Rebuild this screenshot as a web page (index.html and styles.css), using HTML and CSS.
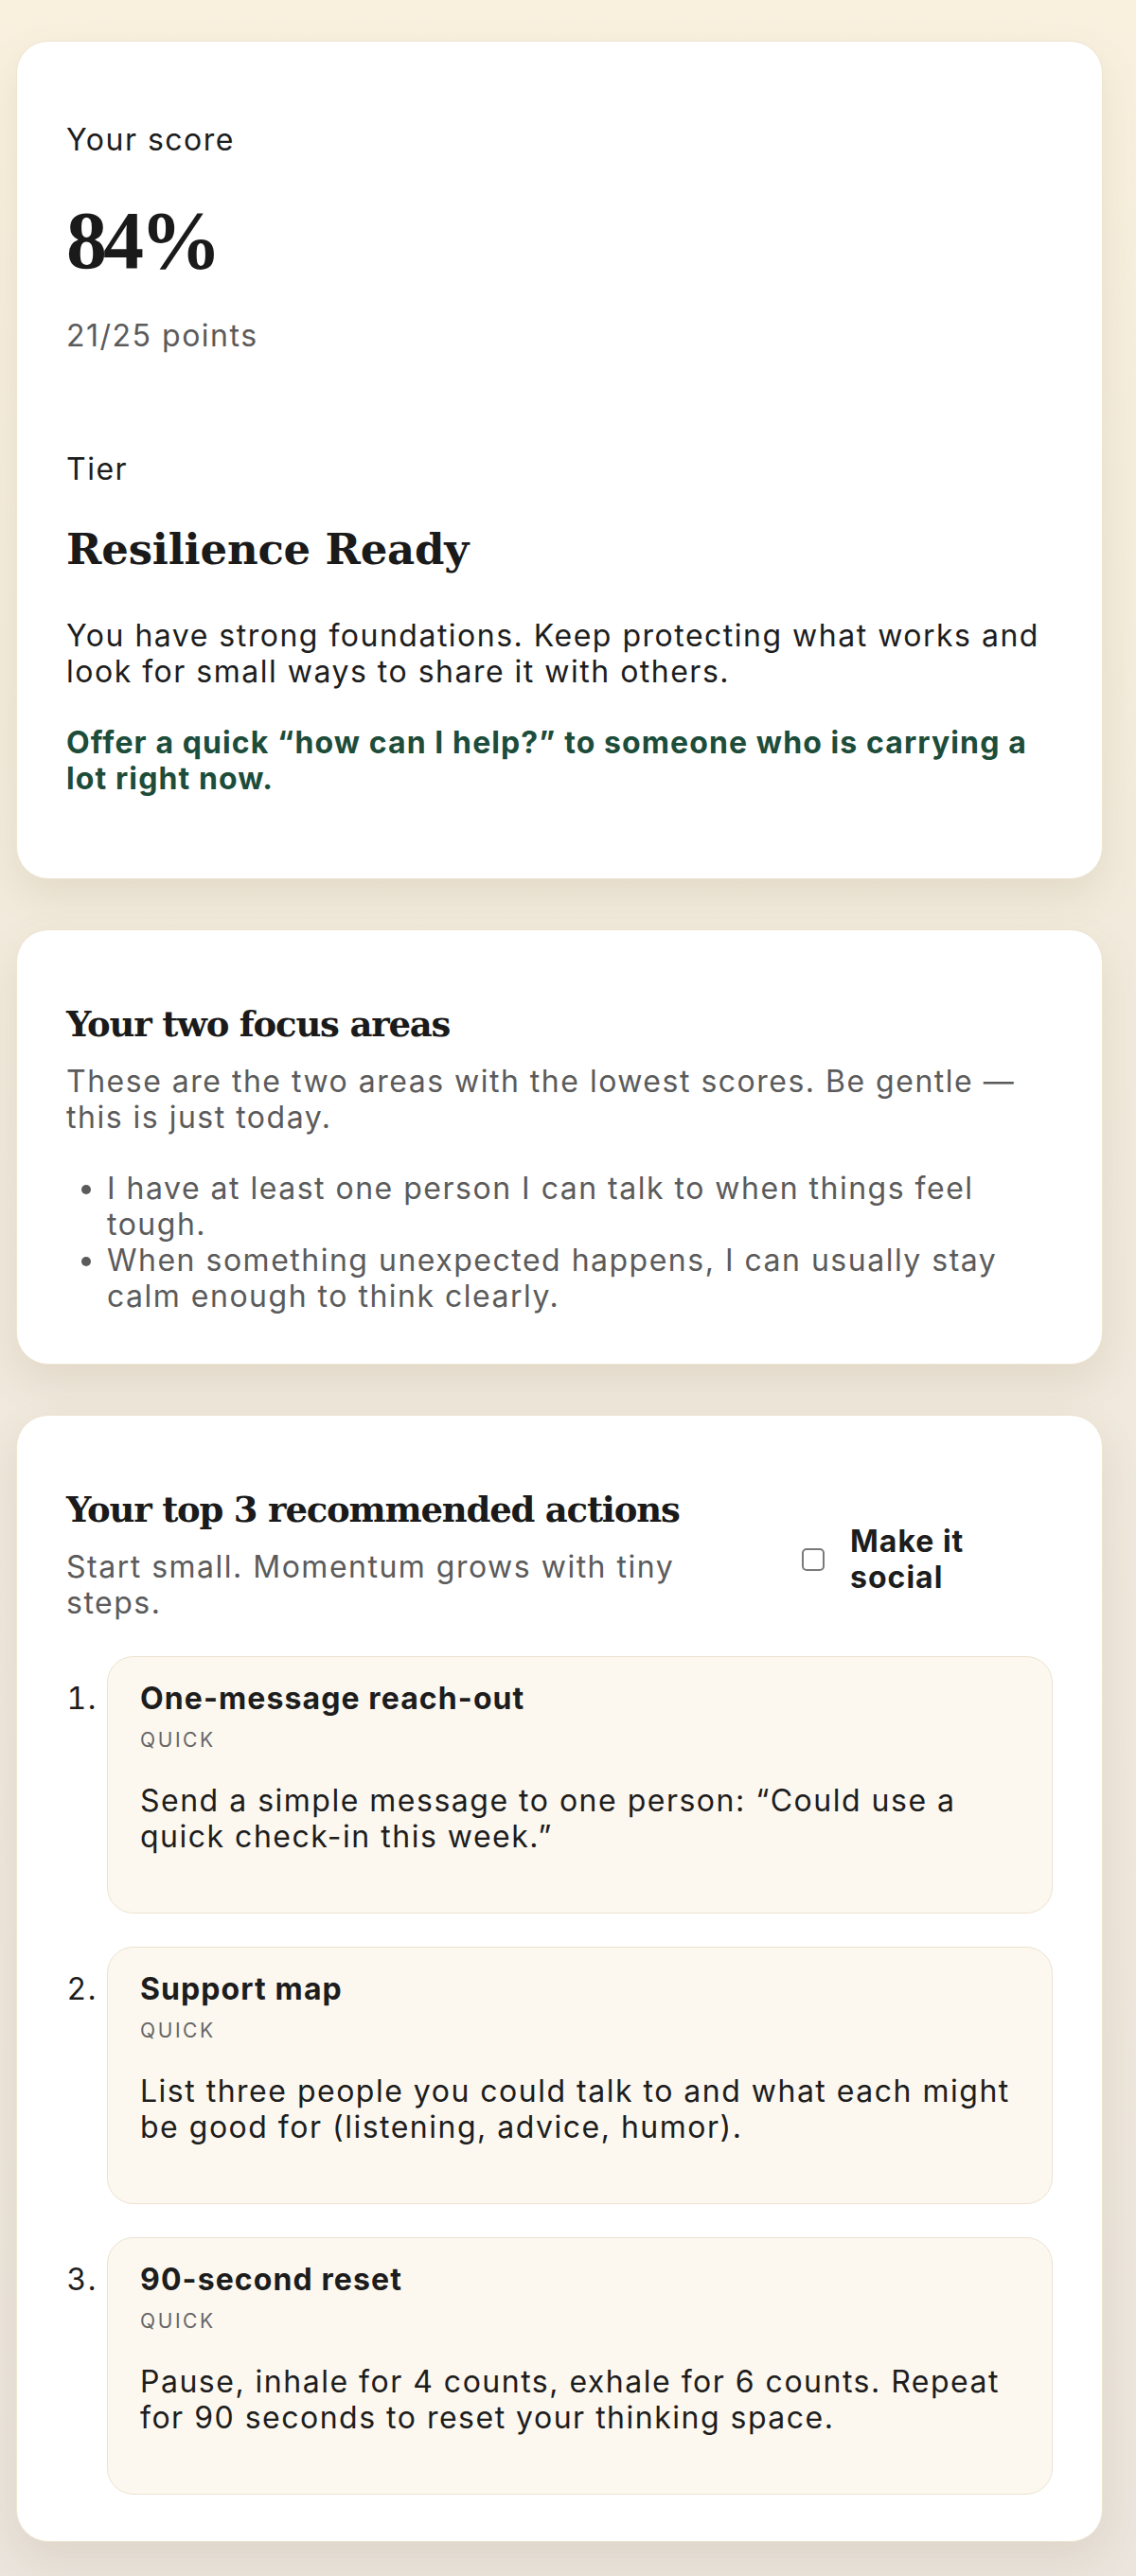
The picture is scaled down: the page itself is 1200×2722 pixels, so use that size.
FILE: index.html
```html
<!DOCTYPE html>
<html lang="en">

    <head>
        <meta charset="UTF-8">
        <meta name="viewport" content="width=device-width, initial-scale=1.0">
        <title>Your results</title>

        <link rel="stylesheet" href="styles.css">

    </head>

    <body>

        <main class="page">

            <section class="card card_result">
                <p class="label">Your score</p>
                <p class="score">84%</p>
                <p class="points">21/25 points</p>

                <p class="label tier_label">Tier</p>
                <h2 class="tier_name">Resilience Ready</h2>
                <p class="summary">You have strong foundations. Keep protecting what works and look for small ways to share it with others.</p>
                <p class="nudge">Offer a quick “how can I help?” to someone who is carrying a lot right now.</p>
            </section>

            <section class="card card_focus">
                <h3 class="card_title">Your two focus areas</h3>
                <p class="muted">These are the two areas with the lowest scores. Be gentle — this is just today.</p>
                <ul class="focus_list">
                    <li>I have at least one person I can talk to when things feel tough.</li>
                    <li>When something unexpected happens, I can usually stay calm enough to think clearly.</li>
                </ul>
            </section>

            <section class="card card_actions">
                <div class="actions_head">
                    <div class="actions_intro">
                        <h3 class="card_title">Your top 3 recommended actions</h3>
                        <p class="muted">Start small. Momentum grows with tiny steps.</p>
                    </div>
                    <label class="social_toggle">
                        <input type="checkbox" id="social_input">
                        <span>Make it social</span>
                    </label>
                </div>

                <ol class="action_list">
                    <li class="action">
                        <h4>One-message reach-out</h4>
                        <span class="tag">Quick</span>
                        <p>Send a simple message to one person: “Could use a quick check-in this week.”</p>
                    </li>
                    <li class="action">
                        <h4>Support map</h4>
                        <span class="tag">Quick</span>
                        <p>List three people you could talk to and what each might be good for (listening, advice, humor).</p>
                    </li>
                    <li class="action">
                        <h4>90-second reset</h4>
                        <span class="tag">Quick</span>
                        <p>Pause, inhale for 4 counts, exhale for 6 counts. Repeat for 90 seconds to reset your thinking space.</p>
                    </li>
                </ol>
            </section>

        </main>

    </body>

</html>
```

FILE: styles.css
```css
* {
    box-sizing: border-box;
}

body {
    margin: 0;
    min-height: 2722px;
    background: linear-gradient(180deg, #f9f1de 0%, #f1eadc 40%, #ebe5dd 100%);
    font-family: "Inter", "Noto Sans", sans-serif;
    font-size: 32px;
    line-height: 38px;
    letter-spacing: 1.5px;
    color: #1d1d1d;
}

p,
h2,
h3,
h4,
ul,
ol {
    margin: 0;
}

.page {
    display: flex;
    flex-direction: column;
    gap: 53px;
    padding: 43px 35px 37px 17px;
}

.card {
    background-color: #fff;
    border: 1px solid #eee4d1;
    border-radius: 34px;
    padding: 76px 52px 52px;
    box-shadow: 0 18px 44px rgba(110, 85, 45, 0.11);
}

/* score card */

.card_result {
    padding-top: 85px;
    padding-bottom: 86px;
}

.score {
    margin-top: 42px;
    font-family: "Liberation Serif", serif;
    font-weight: 700;
    font-size: 86px;
    line-height: 90px;
    letter-spacing: -4px;
    color: #1a1a1a;
}

.points {
    margin-top: 37px;
    color: #5b5b5b;
}

.tier_label {
    margin-top: 103px;
}

.tier_name {
    margin-top: 39px;
    font-family: "DejaVu Serif", serif;
    font-size: 45px;
    line-height: 54px;
    letter-spacing: -0.2px;
    color: #1a1a1a;
}

.summary {
    margin-top: 45px;
}

.nudge {
    margin-top: 37px;
    font-weight: 700;
    letter-spacing: 1.1px;
    color: #1d4d3a;
}

/* focus + actions */

.card_title {
    font-family: "DejaVu Serif", serif;
    font-size: 37px;
    line-height: 46px;
    letter-spacing: -1.2px;
    color: #1a1a1a;
}

.muted {
    margin-top: 19px;
    color: #5b5b5b;
}

.focus_list {
    margin-top: 37px;
    padding-left: 43px;
    color: #5b5b5b;
}

.card_actions {
    padding-bottom: 49px;
}

.actions_head {
    display: flex;
    flex-direction: row;
    align-items: center;
    gap: 62px;
}

.actions_intro {
    width: 715px;
    flex-shrink: 0;
}

.social_toggle {
    display: flex;
    flex-direction: row;
    align-items: center;
    gap: 27px;
    margin-top: 10px;
    font-weight: 700;
    letter-spacing: 1px;
}

.social_toggle span {
    width: 170px;
}

.social_toggle input {
    appearance: none;
    width: 24px;
    height: 24px;
    margin: 0;
    flex-shrink: 0;
    border: 2px solid #7a7a7a;
    border-radius: 5px;
    background-color: #fff;
}

.action_list {
    margin-top: 37px;
    padding-left: 43px;
    display: flex;
    flex-direction: column;
    gap: 35px;
}

.action {
    background-color: #fcf8f0;
    border: 1px solid #ece2cf;
    border-radius: 28px;
    padding: 25px 34px 26px;
}

.action::marker {
    color: #1d1d1d;
}

.action h4 {
    font-weight: 700;
    letter-spacing: 1.1px;
}

.tag {
    display: block;
    margin-top: 10px;
    font-size: 21px;
    line-height: 30px;
    letter-spacing: 2.6px;
    text-transform: uppercase;
    color: #666;
}

.action p {
    margin-top: 30px;
    margin-bottom: 35px;
}
```
